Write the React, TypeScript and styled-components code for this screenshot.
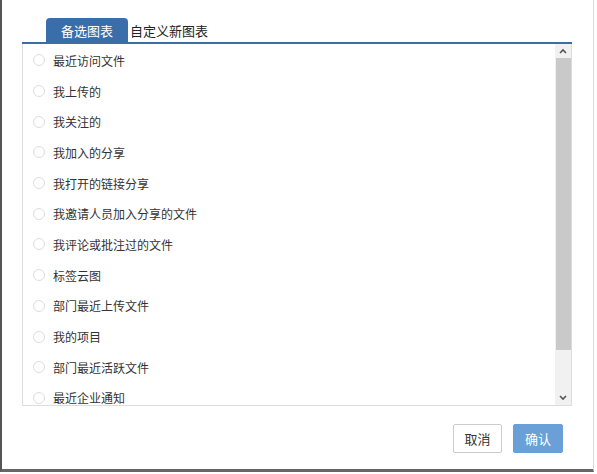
import React from 'react';
import styled, { createGlobalStyle } from 'styled-components';

const Global = createGlobalStyle`
  html, body { margin: 0; padding: 0; background: #fff; }
  body { font-family: "Microsoft YaHei", "Noto Sans CJK SC", sans-serif; }
`;

const Dialog = styled.div`
  width: 591px;
  height: 469px;
  border-left: 2px solid #555;
  border-right: 1px solid #ddd;
  border-bottom: 3px solid #666;
  background: #fff;
  display: flex;
  flex-direction: column;
  padding: 18px 21px 0 20px;
  box-sizing: content-box;
  box-sizing: border-box;
  width: 594px;
  height: 472px;
`;

const Tabs = styled.div`
  display: flex;
  padding-left: 24px;
  border-bottom: 2px solid #3e6e9f;
  height: 24px;
`;

const Tab = styled.div<{ $active?: boolean }>`
  width: 82px;
  font-size: 13px;
  line-height: 25px;
  text-align: center;
  border-radius: 4px 4px 0 0;
  background: ${p => (p.$active ? '#3a6ea8' : 'transparent')};
  color: ${p => (p.$active ? '#fff' : '#222')};
  margin-right: 0;
`;

const Box = styled.div`
  height: 361px;
  border: 1px solid #ddd;
  border-top: none;
  display: flex;
`;

const List = styled.div`
  flex: 1;
  overflow: hidden;
  padding-top: 1px;
`;

const Item = styled.div`
  height: 30.7px;
  display: flex;
  align-items: center;
  padding-left: 10px;
  font-size: 12px;
  color: #333;
`;

const Radio = styled.span`
  width: 12px;
  height: 12px;
  border: 1px solid #ddd;
  border-radius: 50%;
  margin-right: 8px;
  box-sizing: border-box;
  background: #fff;
`;

const Scroll = styled.div`
  width: 16px;
  background: #f1f1f1;
  display: flex;
  flex-direction: column;
  align-items: center;
`;

const Arrow = styled.div`
  height: 14px;
  display: flex;
  align-items: center;
  justify-content: center;
`;

const Thumb = styled.div`
  width: 15px;
  height: 292px;
  background: #c9c9c9;
`;

const Footer = styled.div`
  display: flex;
  justify-content: flex-end;
  gap: 11px;
  padding: 18px 9px 0 0;
`;

const Btn = styled.button<{ $primary?: boolean }>`
  height: 29px;
  width: ${p => (p.$primary ? '50px' : '49px')};
  border-radius: 2px;
  font-size: 13px;
  font-family: inherit;
  border: 1px solid ${p => (p.$primary ? '#6a9fd8' : '#ccc')};
  background: ${p => (p.$primary ? '#6a9fd8' : '#fff')};
  color: ${p => (p.$primary ? '#fff' : '#333')};
`;

const items = [
  '最近访问文件', '我上传的', '我关注的', '我加入的分享', '我打开的链接分享',
  '我邀请人员加入分享的文件', '我评论或批注过的文件', '标签云图', '部门最近上传文件',
  '我的项目', '部门最近活跃文件', '最近企业通知',
];

const Chevron = ({ up }: { up?: boolean }) => (
  <svg width="8" height="6" viewBox="0 0 8 6">
    <path d={up ? 'M1 5 L4 2 L7 5' : 'M1 1 L4 4 L7 1'} stroke="#555" strokeWidth="1.6" fill="none" />
  </svg>
);

export default function App() {
  return (
    <>
      <Global />
      <Dialog>
        <Tabs>
          <Tab $active>备选图表</Tab>
          <Tab>自定义新图表</Tab>
        </Tabs>
        <Box>
          <List>
            {items.map(t => (
              <Item key={t}><Radio />{t}</Item>
            ))}
          </List>
          <Scroll>
            <Arrow><Chevron up /></Arrow>
            <Thumb />
            <div style={{ flex: 1 }} />
            <Arrow><Chevron /></Arrow>
          </Scroll>
        </Box>
        <Footer>
          <Btn>取消</Btn>
          <Btn $primary>确认</Btn>
        </Footer>
      </Dialog>
    </>
  );
}
